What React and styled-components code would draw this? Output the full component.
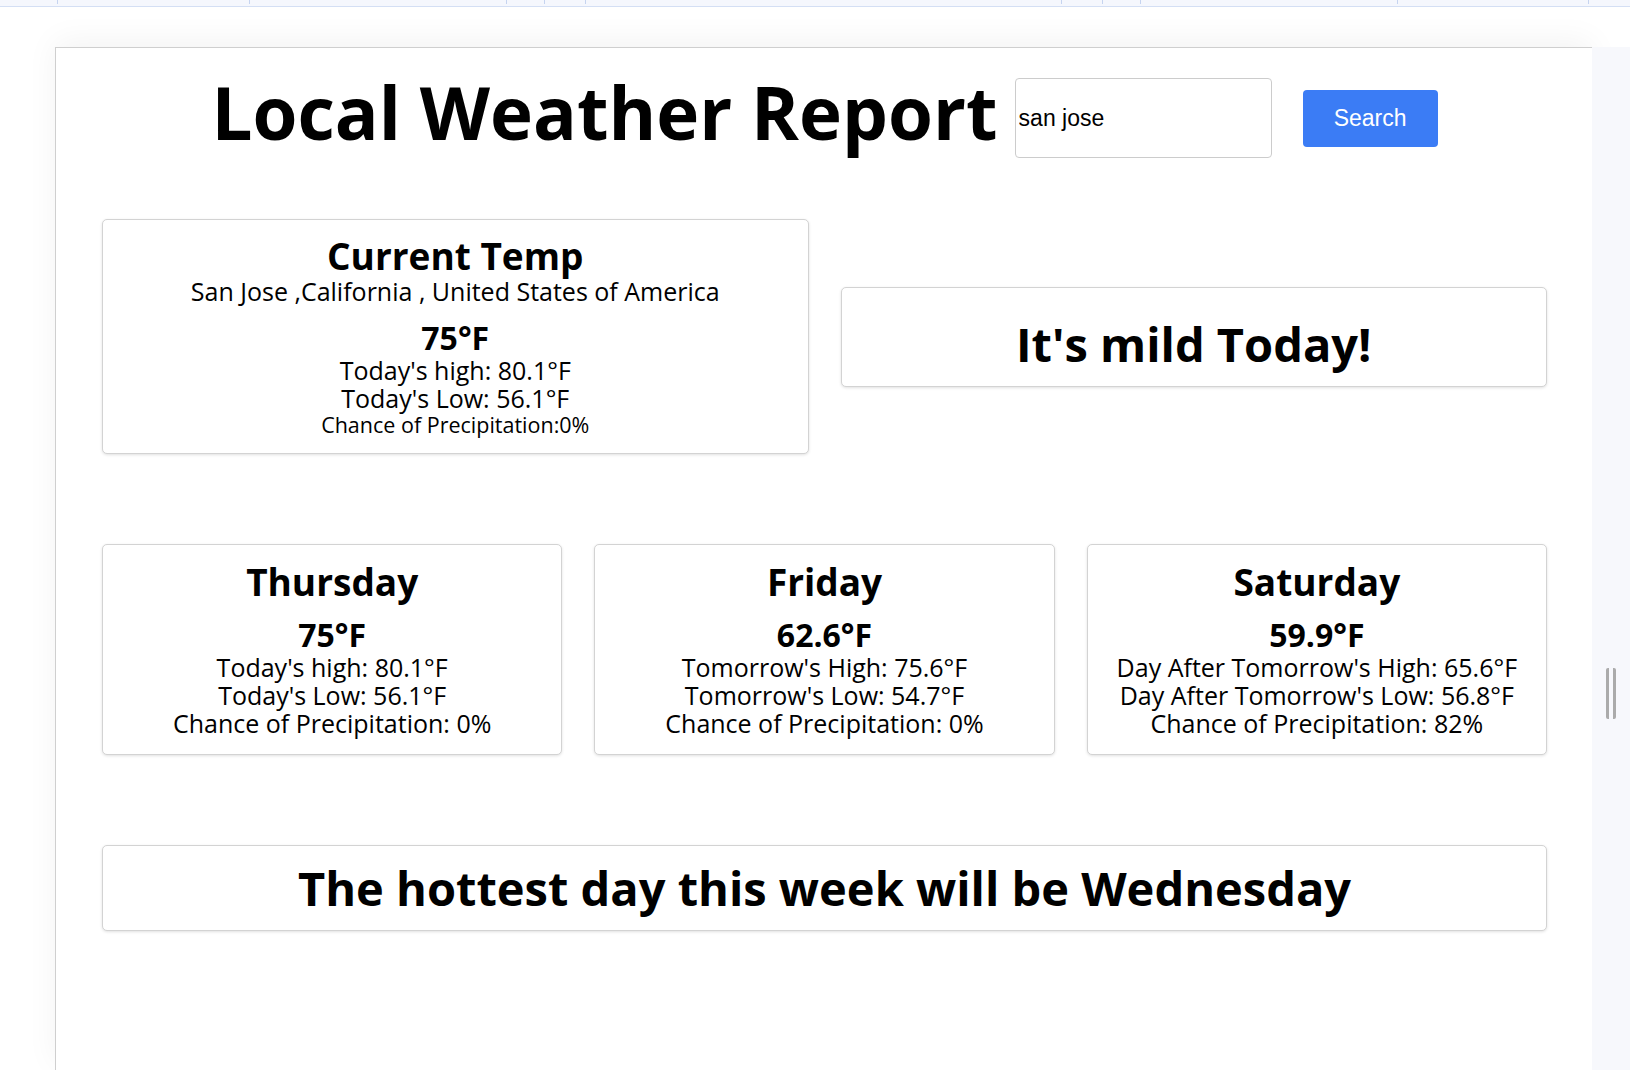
import React from "react";
import styled, { createGlobalStyle } from "styled-components";

const forecast = [
  {
    day: "Thursday",
    temp: "75°F",
    high: "Today's high: 80.1°F",
    low: "Today's Low: 56.1°F",
    rain: "Chance of Precipitation: 0%",
  },
  {
    day: "Friday",
    temp: "62.6°F",
    high: "Tomorrow's High: 75.6°F",
    low: "Tomorrow's Low: 54.7°F",
    rain: "Chance of Precipitation: 0%",
  },
  {
    day: "Saturday",
    temp: "59.9°F",
    high: "Day After Tomorrow's High: 65.6°F",
    low: "Day After Tomorrow's Low: 56.8°F",
    rain: "Chance of Precipitation: 82%",
  },
];

const ticks = [57, 249, 506, 544, 585, 1061, 1102, 1140, 1397, 1588];

function App() {
  return (
    <>
      <GlobalStyle />
      <TopBar>
        {ticks.map((x) => (
          <Tick key={x} style={{ left: x }} />
        ))}
      </TopBar>
      <Stage>
        <Preview>
          <Header>
            <Title>Local Weather Report</Title>
            <SearchInput defaultValue="san jose" />
            <SearchButton>Search</SearchButton>
          </Header>

          <TodayRow>
            <Card $bottom={15}>
              <CardTitle>Current Temp</CardTitle>
              <Location>San Jose ,California , United States of America</Location>
              <Temp $top={16}>75°F</Temp>
              <Line>Today's high: 80.1°F</Line>
              <Line>Today's Low: 56.1°F</Line>
              <SmallLine>Chance of Precipitation:0%</SmallLine>
            </Card>
            <MessageCard>It's mild Today!</MessageCard>
          </TodayRow>

          <ForecastRow>
            {forecast.map((f) => (
              <Card key={f.day} $bottom={17}>
                <CardTitle $height={46}>{f.day}</CardTitle>
                <Temp $top={12}>{f.temp}</Temp>
                <Line>{f.high}</Line>
                <Line>{f.low}</Line>
                <Line>{f.rain}</Line>
              </Card>
            ))}
          </ForecastRow>

          <HottestCard>The hottest day this week will be Wednesday</HottestCard>
        </Preview>
        <Strip>
          <Grip />
        </Strip>
      </Stage>
    </>
  );
}

export default App;

const GlobalStyle = createGlobalStyle`
  html, body {
    margin: 0;
    padding: 0;
    height: 100%;
    overflow: hidden;
    background: #ffffff;
  }
  body {
    font-family: "Open Sans", "DejaVu Sans", sans-serif;
    color: #000;
  }
  #root {
    height: 100%;
    display: flex;
    flex-direction: column;
  }
`;

const TopBar = styled.div`
  position: relative;
  height: 6px;
  flex-shrink: 0;
  background: #f5f7fd;
  border-bottom: 1px solid #d4dff4;
`;

const Tick = styled.span`
  position: absolute;
  top: 0;
  width: 1px;
  height: 4px;
  background: #c6d4f0;
`;

const Stage = styled.div`
  flex: 1;
  display: flex;
  padding: 40px 0 0 55px;
  min-height: 0;
`;

const Preview = styled.div`
  flex: 1;
  background: #fff;
  border-left: 1px solid #cfcfcf;
  border-top: 1px solid #cfcfcf;
  box-shadow: 0 -6px 30px rgba(0, 0, 0, 0.05);
  padding: 30px 45px 0 46px;
  overflow: hidden;
`;

const Strip = styled.div`
  width: 38px;
  flex-shrink: 0;
  background: #f7f8fc;
  display: flex;
  justify-content: center;
  padding-top: 621px;
`;

const Grip = styled.div`
  width: 10px;
  height: 51px;
  border-left: 3px solid #ababab;
  border-right: 3px solid #ababab;
  border-radius: 2px;
  box-sizing: border-box;
`;

const Header = styled.div`
  display: flex;
  align-items: center;
  justify-content: center;
  height: 80px;
`;

const Title = styled.h1`
  margin: 0 17px 12px 0;
  font-size: 72.7px;
  font-weight: 700;
  line-height: 1.2;
  white-space: nowrap;
`;

const SearchInput = styled.input`
  width: 257px;
  height: 80px;
  box-sizing: border-box;
  border: 1px solid #cccccc;
  border-radius: 4px;
  padding: 0 3px;
  font-family: "Liberation Sans", Arial, sans-serif;
  font-size: 23px;
  color: #000;
  outline: none;
`;

const SearchButton = styled.button`
  margin-left: 31px;
  width: 135px;
  height: 57px;
  border: none;
  border-radius: 4px;
  background: #3b7cf5;
  color: #fff;
  font-family: "Liberation Sans", Arial, sans-serif;
  font-size: 23px;
  cursor: pointer;
`;

const TodayRow = styled.div`
  display: grid;
  grid-template-columns: 1fr 1fr;
  gap: 32px;
  align-items: center;
  margin-top: 61px;
`;

const ForecastRow = styled.div`
  display: grid;
  grid-template-columns: repeat(3, 1fr);
  gap: 32px;
  margin-top: 90px;
`;

const Card = styled.div`
  box-sizing: border-box;
  border: 1px solid #d3d3d3;
  border-radius: 5px;
  box-shadow: 0 1px 3px rgba(0, 0, 0, 0.12);
  background: #fff;
  text-align: center;
  padding: 14px 10px ${(p) => p.$bottom ?? 14}px;
`;

const CardTitle = styled.div`
  font-size: 37px;
  font-weight: 700;
  line-height: ${(p) => p.$height ?? 44}px;
`;

const Location = styled.div`
  font-size: 25px;
  line-height: 26px;
`;

const Temp = styled.div`
  margin-top: ${(p) => p.$top ?? 14}px;
  font-size: 32px;
  font-weight: 700;
  line-height: 36px;
`;

const Line = styled.div`
  font-size: 25px;
  line-height: 28px;
`;

const SmallLine = styled.div`
  font-size: 21.5px;
  line-height: 26px;
`;

const MessageCard = styled(Card)`
  padding: 25px 10px 11px;
  font-size: 47px;
  font-weight: 700;
  line-height: 62px;
`;

const HottestCard = styled(Card)`
  margin-top: 90px;
  padding: 11px 10px 11px;
  font-size: 47px;
  font-weight: 700;
  line-height: 62px;
`;
